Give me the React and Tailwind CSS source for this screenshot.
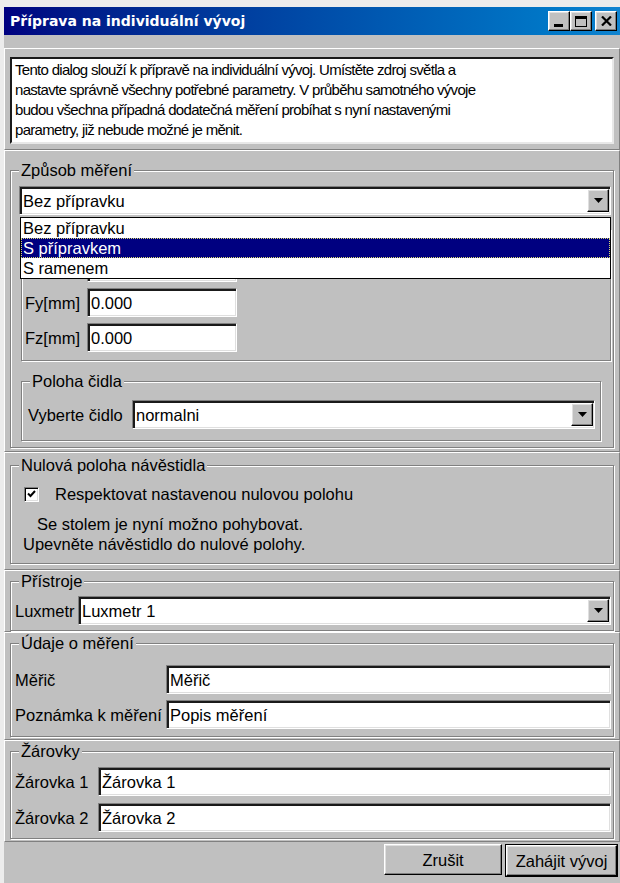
import React from 'react';

// classic 3D edges
const raised = 'border border-t-white border-l-white border-b-black border-r-black shadow-[inset_-1px_-1px_0_#808080,inset_1px_1px_0_#dfdfdf]';
const sunken = 'border border-t-[#808080] border-l-[#808080] border-b-white border-r-white shadow-[inset_2px_2px_0_#1a1a1a,inset_-1px_-1px_0_#dfdfdf]';
const etched = 'border border-[#808080] shadow-[inset_1px_1px_0_#fff,1px_1px_0_#fff]';
const panel = 'border border-t-white border-l-white border-b-[#808080] border-r-[#808080]';

const Group = ({ title, className = '', children }) => (
  <div className={`relative ${etched} ${className}`}>
    {title && (
      <span className="absolute -top-[11px] left-[8px] bg-[#c0c0c0] px-[2px] leading-[20px]">{title}</span>
    )}
    {children}
  </div>
);

const Field = ({ value, className = '' }) => (
  <div className={`h-[29px] bg-white ${sunken} flex items-center pl-[3px] ${className}`}>{value}</div>
);

const Arrow = () => (
  <svg width="9" height="5" viewBox="0 0 9 5">
    <path d="M0 0h9L4.5 5z" fill="#000" />
  </svg>
);

const Combo = ({ value, className = '' }) => (
  <div className={`h-[29px] bg-white ${sunken} flex items-center pl-[3px] ${className}`}>
    <span className="flex-1">{value}</span>
    <span className={`w-[22px] h-[23px] mr-[1px] bg-[#c0c0c0] ${raised} flex items-center justify-center`}>
      <Arrow />
    </span>
  </div>
);

const CapBtn = ({ children }) => (
  <div className={`w-[22px] h-[20px] bg-[#c0c0c0] ${raised} flex items-center justify-center`}>{children}</div>
);

const Button = ({ label, def }) => (
  <div className={def ? 'border border-black' : ''}>
    <div className={`h-[31px] ${def ? 'w-[111px]' : 'w-[118px]'} ${raised} flex items-center justify-center`}>{label}</div>
  </div>
);

const options = ['Bez přípravku', 'S přípravkem', 'S ramenem'];

export default function App() {
  return (
    <div className="w-[620px] h-[883px] overflow-hidden bg-[#c0c0c0] border-l-4 border-t-[7px] border-[#ececec] flex flex-col text-[16.5px] leading-[20px] whitespace-nowrap text-black font-['Liberation_Sans',Arial,sans-serif]">
      {/* caption bar */}
      <div className="h-[28px] shrink-0 bg-linear-to-r from-[#000080] to-[#1084d0] flex items-center pl-[6px] pr-[3px]">
        <span className="flex-1 text-white font-bold text-[14px] font-['DejaVu_Sans',sans-serif]">Příprava na individuální vývoj</span>
        <CapBtn>
          <span className="w-[9px] h-[3px] bg-black mt-[9px] -ml-[2px]" />
        </CapBtn>
        <CapBtn>
          <span className="w-[12px] h-[11px] border border-black border-t-[3px]" />
        </CapBtn>
        <div className="ml-[3px]">
          <CapBtn>
            <svg width="11" height="10" viewBox="0 0 11 10">
              <path d="M1 0.5l4.5 4.5L10 0.5M1 9.5l4.5-4.5L10 9.5" stroke="#000" strokeWidth="2.2" fill="none" />
            </svg>
          </CapBtn>
        </div>
      </div>

      <div className="h-[13px] shrink-0" />

      {/* description */}
      <div className={`${panel} h-[102px] px-[5px] pt-[8px]`}>
        <div className="h-[87px] bg-white border-2 border-t-[#1a1a1a] border-l-[#1a1a1a] border-b-[#e8e8e8] border-r-[#e8e8e8] px-[3px] pt-[1px] text-[15px] tracking-[-0.7px]">
          Tento dialog slouží k přípravě na individuální vývoj. Umístěte zdroj světla a<br />
          nastavte správně všechny potřebné parametry. V průběhu samotného vývoje<br />
          budou všechna případná dodatečná měření probíhat s nyní nastavenými<br />
          parametry, již nebude možné je měnit.
        </div>
      </div>

      {/* measurement mode */}
      <div className={`${panel} h-[302px] px-[5px] pt-[19px]`}>
        <Group title="Způsob měření" className="h-[278px] pl-[8px] pr-[2px] pt-[15px]">
          <div className="relative">
            <Combo value="Bez přípravku" />
            <div className="absolute left-[1px] right-[0px] top-[31px] z-10 bg-white border border-black">
              {options.map((o, i) => (
                <div
                  key={o}
                  className={`h-[20px] pl-[2px] ${i === 1 ? 'bg-[#000080] text-white outline-1 outline-dotted outline-[#d8d870] -outline-offset-1' : ''}`}
                >
                  {o}
                </div>
              ))}
            </div>
          </div>

          <Group className="mt-[14px] h-[132px] ml-[2px] pl-[3px] pt-[23px] flex flex-col gap-[6px]">
            {['', 'Fy[mm]', 'Fz[mm]'].map((l, i) => (
              <div key={i} className="flex items-center gap-[3px]">
                <span className="w-[59px]">{l}</span>
                <Field value={l ? '0.000' : ''} className="w-[150px]" />
              </div>
            ))}
          </Group>

          <Group title="Poloha čidla" className="mt-[20px] h-[60px] ml-[2px] mr-[10px] pl-[6px] pr-[5px] pt-[18px]">
            <div className="flex items-center">
              <span className="w-[104px]">Vyberte čidlo</span>
              <Combo value="normalni" className="flex-1" />
            </div>
          </Group>
        </Group>
      </div>

      {/* zero position */}
      <div className={`${panel} h-[118px] px-[5px] pt-[12px]`}>
        <Group title="Nulová poloha návěstidla" className="h-[99px] pl-[13px] pt-[18px]">
          <div className="flex items-center gap-[16px]">
            <span className="w-[15px] h-[15px] bg-white border border-t-[#808080] border-l-[#808080] border-b-white border-r-white shadow-[inset_1px_1px_0_#000,inset_-1px_-1px_0_#dfdfdf] flex items-center justify-center">
              <svg width="9" height="8" viewBox="0 0 9 8">
                <path d="M1 3.5l2.5 2.5L8 1" stroke="#000" strokeWidth="2" fill="none" />
              </svg>
            </span>
            <span>Respektovat nastavenou nulovou polohu</span>
          </div>
          <div className="mt-[10px] pl-[13px]">Se stolem je nyní možno pohybovat.</div>
          <div className="-ml-[1px]">Upevněte návěstidlo do nulové polohy.</div>
        </Group>
      </div>

      {/* instruments */}
      <div className={`${panel} h-[62px] px-[5px] pt-[10px]`}>
        <Group title="Přístroje" className="h-[50px] pl-[4px] pr-[2px] pt-[14px]">
          <div className="flex items-center">
            <span className="w-[63px]">Luxmetr</span>
            <Combo value="Luxmetr 1" className="flex-1" />
          </div>
        </Group>
      </div>

      {/* measurement data */}
      <div className={`${panel} h-[108px] px-[5px] pt-[10px]`}>
        <Group title="Údaje o měření" className="h-[94px] pl-[4px] pr-[2px] pt-[21px] flex flex-col gap-[6px]">
          {[['Měřič', 'Měřič'], ['Poznámka k měření', 'Popis měření']].map(([l, v]) => (
            <div key={l} className="flex items-center">
              <span className="w-[151px]">{l}</span>
              <Field value={v} className="flex-1" />
            </div>
          ))}
        </Group>
      </div>

      {/* bulbs */}
      <div className={`${panel} h-[102px] px-[5px] pt-[10px]`}>
        <Group title="Žárovky" className="h-[88px] pl-[4px] pr-[2px] pt-[15px] flex flex-col gap-[7px]">
          {['Žárovka 1', 'Žárovka 2'].map((l) => (
            <div key={l} className="flex items-center">
              <span className="w-[83px]">{l}</span>
              <Field value={l} className="flex-1" />
            </div>
          ))}
        </Group>
      </div>

      <div className="flex justify-end gap-[3px] pr-[2px] pt-[2px]">
        <Button label="Zrušit" />
        <Button label="Zahájit vývoj" def />
      </div>
    </div>
  );
}
